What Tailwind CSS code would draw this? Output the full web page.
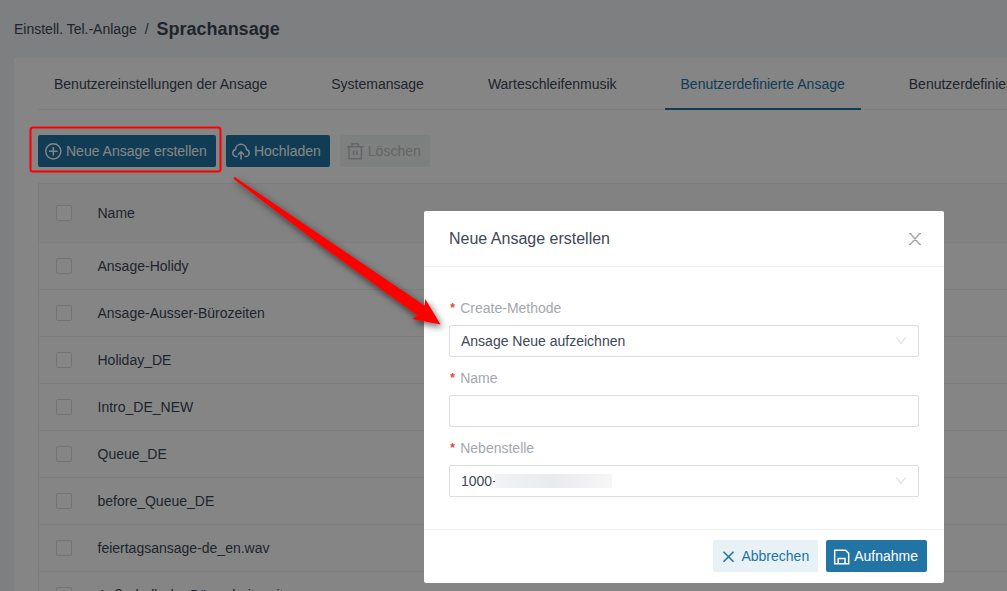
<!DOCTYPE html>
<html lang="de">
<head>
    <meta charset="UTF-8">
    <meta name="viewport" content="width=device-width, initial-scale=1.0">
    <title>Sprachansage</title>
    <script src="https://cdn.jsdelivr.net/npm/@tailwindcss/browser@4"></script>
</head>
<body class="relative h-screen overflow-hidden bg-[#f2f4f8] font-['Liberation_Sans',Arial,sans-serif] text-sm text-[#3d4757]">
    <!-- Page -->
    <div class="pl-3.5">
        <header class="flex h-[58px] items-center gap-2">
            <a href="#">Einstell. Tel.-Anlage</a>
            <span>/</span>
            <h1 class="text-lg font-bold">Sprachansage</h1>
        </header>

        <main class="bg-white pl-6">
            <nav class="flex gap-8 overflow-hidden whitespace-nowrap shadow-[inset_0_-1px_0_#f0f0f0]">
                <a href="#" class="px-4 py-4">Benutzereinstellungen der Ansage</a>
                <a href="#" class="px-4 py-4">Systemansage</a>
                <a href="#" class="px-4 py-4">Warteschleifenmusik</a>
                <a href="#" class="border-b-2 border-[#2274a5] px-4 pt-4 pb-3.5 text-[#2274a5]">Benutzerdefinierte Ansage</a>
                <a href="#" class="px-4 py-4">Benutzerdefinierte Wartemusik</a>
            </nav>

            <div class="flex gap-2.5 pt-[25px] pb-4">
                <button class="flex h-8 items-center gap-1 rounded-xs bg-[#2274a5] pr-[9px] pl-1.5 text-white">
                    <svg class="size-[18px]" viewBox="0 0 18 18" fill="none" stroke="currentColor" stroke-width="1.5">
                        <circle cx="9.300" cy="9.300" r="7.600"/>
                        <path d="M9.300 5v8.600M5 9.300h8.600"/>
                    </svg>
                    Neue Ansage erstellen
                </button>
                <button class="flex h-8 items-center gap-1 rounded-xs bg-[#2274a5] pr-[9px] pl-1.5 text-white">
                    <svg class="size-[18px]" viewBox="0 0 18 18" fill="none" stroke="currentColor" stroke-width="1.5">
                        <path d="M5.4 14.6H4.6C2.500 14.600 .8 13 .8 10.900 .8 9.200 1.900 7.800 3.500 7.400 3.700 4.500 6 2.300 9 2.300s5.300 2.200 5.500 5.100c1.600.4 2.700 1.800 2.700 3.500 0 2.100-1.700 3.700-3.800 3.700h-.8"/>
                        <path d="M9 17.500V10M6 12.700 9 9.700l3 3"/>
                    </svg>
                    Hochladen
                </button>
                <button disabled class="flex h-8 items-center gap-1 rounded-xs bg-[#f1f4f4] pr-[9px] pl-1.5 text-[#bfc2c6]">
                    <svg class="size-[18px]" viewBox="0 0 18 18" fill="none" stroke="currentColor" stroke-width="1.5">
                        <path d="M1 4.800h16.400M6 4.800V1.700h6.400v3.100M3 4.800v11.900h12.400V4.800M7.600 8.500v4.500M10.800 8.500v4.500"/>
                    </svg>
                    Löschen
                </button>
            </div>

            <table class="w-full table-fixed border-t border-l border-[#f0f0f0] text-left">
                <thead class="bg-[#fafafa]">
                    <tr class="h-[59px] border-b border-[#f0f0f0]">
                        <th class="w-[59px] pl-[17px]"><input type="checkbox" aria-label="Alle auswählen" class="block size-4 appearance-none rounded-xs border border-[#dcdcdc] bg-white"></th>
                        <th class="font-normal">Name</th>
                    </tr>
                </thead>
                <tbody id="promptRows"></tbody>
            </table>
        </main>
    </div>

    <!-- Backdrop -->
    <div class="absolute inset-0 bg-black/48"></div>

    <!-- Dialog -->
    <section role="dialog" aria-labelledby="dialogTitle" class="absolute top-[211px] right-[63px] w-[520px] rounded-xs bg-white">
        <div class="flex h-14 items-center justify-between border-b border-[#f0f0f0] px-[25px]">
            <h2 id="dialogTitle" class="text-base">Neue Ansage erstellen</h2>
            <button aria-label="Schließen" class="-mr-0.5 text-[#a3a8b0]">
                <svg class="size-3" viewBox="0 0 12 12" fill="none" stroke="currentColor" stroke-width="1.4">
                    <path d="M1.300.5 10.700 11.500M10.700.5 1.300 11.500M0 .5h2.500M9.500.5H12M0 11.500h2.500M9.500 11.500H12"/>
                </svg>
            </button>
        </div>

        <form class="px-[25px] pt-8 pb-8">
            <label for="method" class="flex h-[26px] gap-1 leading-[18px] text-[#a3a8b0]"><span class="font-['Liberation_Mono',monospace] text-xs leading-5 font-bold text-[#e8452c]">*</span>Create-Methode</label>
            <div class="relative mb-3">
                <select id="method" class="block h-8 w-full appearance-none rounded-xs border border-[#dcdde1] bg-white px-[11px]">
                    <option>Ansage Neue aufzeichnen</option>
                </select>
                <svg class="pointer-events-none absolute top-3 right-3 h-2 w-3" viewBox="0 0 12 8" fill="none" stroke="#dcdee1" stroke-width="1.100"><path d="M1.300.5 6 6.700 10.700.5"/></svg>
            </div>

            <label for="name" class="flex h-[26px] gap-1 leading-[18px] text-[#a3a8b0]"><span class="font-['Liberation_Mono',monospace] text-xs leading-5 font-bold text-[#e8452c]">*</span>Name</label>
            <input id="name" type="text" class="mb-3 block h-8 w-full rounded-xs border border-[#dcdde1] px-[11px]">

            <label for="extension" class="flex h-[26px] gap-1 leading-[18px] text-[#a3a8b0]"><span class="font-['Liberation_Mono',monospace] text-xs leading-5 font-bold text-[#e8452c]">*</span>Nebenstelle</label>
            <div class="relative">
                <select id="extension" class="block h-8 w-full appearance-none rounded-xs border border-[#dcdde1] bg-white px-[11px]">
                    <option>1000-</option>
                </select>
                <!-- Redacted extension name -->
                <span class="absolute top-[9px] left-[46px] h-3.5 w-[117px] bg-linear-to-r from-[#f2f3f4] via-[#e9eaec] to-[#f7f7f8]"></span>
                <svg class="pointer-events-none absolute top-3 right-3 h-2 w-3" viewBox="0 0 12 8" fill="none" stroke="#dcdee1" stroke-width="1.100"><path d="M1.300.5 6 6.700 10.700.5"/></svg>
            </div>
        </form>

        <div class="flex justify-end gap-2 border-t border-[#f0f0f0] pt-2.5 pr-[17px] pb-[11px]">
            <button class="flex h-8 items-center gap-1.5 rounded-xs bg-[#e8f1f6] px-[9px] text-[#2274a5]">
                <svg class="size-[13px]" viewBox="0 0 13 13" fill="none" stroke="currentColor" stroke-width="1.600">
                    <path d="M1.500 1.700 11.500 11.700M11.500 1.700 1.500 11.700"/>
                </svg>
                Abbrechen
            </button>
            <button class="flex h-8 items-center gap-1 rounded-xs bg-[#2274a5] pr-[9px] pl-[7px] text-white">
                <svg class="size-[17px]" viewBox="0 0 17 17" fill="none" stroke="currentColor" stroke-width="1.500">
                    <path d="M1.700 2.200h10.800l3.200 3.200v10.400H1.700zM5.200 15.800v-5.200h6.800v5.200"/>
                </svg>
                Aufnahme
            </button>
        </div>
    </section>

    <!-- Callout frame and arrow -->
    <svg class="pointer-events-none absolute top-0 left-0" width="460" height="340" viewBox="0 0 460 340">
        <defs>
            <filter id="arrowShadow" x="-10%" y="-10%" width="125%" height="125%">
                <feDropShadow dx="2" dy="3" stdDeviation="3.500" flood-color="#000" flood-opacity=".6"/>
            </filter>
        </defs>
        <rect x="30.500" y="127.500" width="190" height="44" rx="2.500" fill="none" stroke="#f00" stroke-width="2"/>
        <path d="M234 177 235.500 177.500 424.500 305.500 425.300 299 440.500 324.500 412 319 417.500 315.500 325 248.500 233.700 179z" fill="#f00" filter="url(#arrowShadow)"/>
    </svg>

    <script>
        const prompts = [
            'Ansage-Holidy',
            'Ansage-Ausser-Bürozeiten',
            'Holiday_DE',
            'Intro_DE_NEW',
            'Queue_DE',
            'before_Queue_DE',
            'feiertagsansage-de_en.wav',
            'Außerhalb der Büroarbeitszeit'
        ];

        document.getElementById('promptRows').innerHTML = prompts.map(name => `
            <tr class="h-[47px] border-b border-[#f0f0f0]">
                <td class="pl-[17px]"><input type="checkbox" aria-label="${name}" class="block size-4 appearance-none rounded-xs border border-[#dcdcdc] bg-white"></td>
                <td>${name}</td>
            </tr>
        `).join('');
    </script>
</body>
</html>
